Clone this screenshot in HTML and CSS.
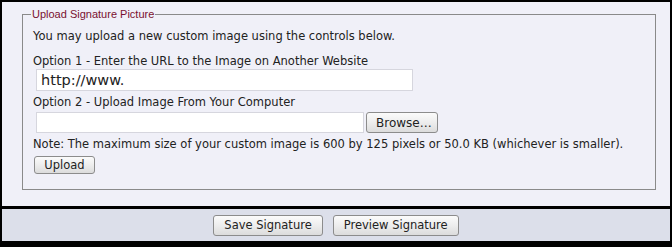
FILE: index.html
```html
<!DOCTYPE html>
<html>
<head>
  <meta charset="UTF-8">
  <title>Edit Signature</title>
  <link rel="stylesheet" href="styles.css">
</head>
<body>
  <div class="frame">
    <div class="panel">
      <fieldset class="upload-box">
        <legend>Upload Signature Picture</legend>
        <p class="intro">You may upload a new custom image using the controls below.</p>

        <label class="opt-label" for="picUrl">Option 1 - Enter the URL to the Image on Another Website</label>
        <input type="text" id="picUrl" class="url-input" value="http://www.">

        <label class="opt-label" for="picFile">Option 2 - Upload Image From Your Computer</label>
        <div class="file-row">
          <input type="text" id="picFile" class="file-input" readonly>
          <button class="btn browse-btn">Browse…</button>
        </div>

        <p class="note">Note: The maximum size of your custom image is 600 by 125 pixels or 50.0 KB (whichever is smaller).</p>
        <button class="btn upload-btn">Upload</button>
      </fieldset>
    </div>

    <div class="footer-bar">
      <button class="btn">Save Signature</button>
      <button class="btn">Preview Signature</button>
    </div>
  </div>
</body>
</html>
```

FILE: styles.css
```css
body {
  margin: 0;
  padding: 0;
  background: #000;
  font-family: 'DejaVu Sans', Verdana, sans-serif;
  font-size: 11.5px;
  color: #222;
}
.frame {
  width: 668px;
  border: 2px solid #000;
  border-bottom: none;
  background: #000;
}
.panel {
  background: #f0f0f8;
  padding: 6px 14px 16px 20px;
}
.upload-box {
  margin: 0;
  border: 1px solid #8a8a8a;
  padding: 8px 10px 15px 10px;
}
.upload-box legend {
  font-family: 'Liberation Sans', Arial, sans-serif;
  font-size: 11px;
  color: #7a1030;
  padding: 0 1px;
  margin-left: -2px;
}
.intro {
  margin: 0 0 9px;
  line-height: 16px;
}
.opt-label {
  display: block;
  line-height: 16px;
}
.url-input {
  display: block;
  box-sizing: border-box;
  width: 377px;
  height: 22px;
  margin: 0 0 3px 3px;
  padding: 0 4px;
  border: 1px solid #d6d6de;
  background: #fff;
  font-family: 'DejaVu Sans', Verdana, sans-serif;
  font-size: 14.5px;
  color: #222;
  outline: none;
}
.file-row {
  display: flex;
  gap: 2px;
  margin: 2px 0 0 3px;
  height: 21px;
}
.file-input {
  box-sizing: border-box;
  width: 328px;
  height: 21px;
  border: 1px solid #d6d6de;
  background: #fff;
  outline: none;
}
.btn {
  box-sizing: border-box;
  border: 1px solid #8c8c8c;
  border-radius: 3px;
  background: linear-gradient(to bottom, #fbfbfb, #ededed 50%, #dcdcdc);
  font-family: 'DejaVu Sans', Verdana, sans-serif;
  font-size: 11.5px;
  color: #222;
  padding: 0 9px;
  height: 20px;
}
.browse-btn {
  width: 72px;
  height: 21px;
  font-size: 12px;
}
.note {
  margin: 3px 0 4px;
  line-height: 16px;
}
.upload-btn {
  margin-left: 1px;
  width: 61px;
  height: 18px;
}
.footer-bar {
  border-top: 3px solid #000;
  border-bottom: 6px solid #000;
  background: #dcdfea;
  height: 32px;
  display: flex;
  justify-content: center;
  align-items: center;
  gap: 10px;
}
.footer-bar .btn {
  height: 21px;
  padding: 0 10px;
}
```
